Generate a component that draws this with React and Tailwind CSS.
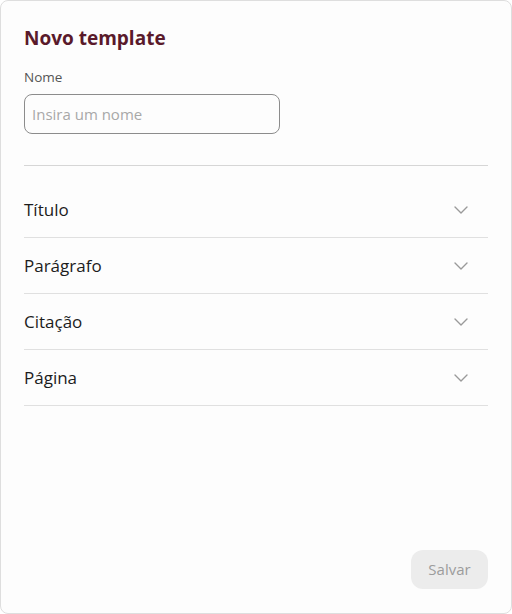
import React from "react";

const sections = ["Título", "Parágrafo", "Citação", "Página"];

function Chevron() {
  return (
    <svg width="14" height="8" viewBox="0 0 14 8" fill="none" className="text-[#9a9a9a]">
      <path d="M1 1l6 6 6-6" stroke="currentColor" strokeWidth="1.4" strokeLinecap="round" strokeLinejoin="round" />
    </svg>
  );
}

export default function App() {
  return (
    <div className="h-screen w-full bg-white font-['Open_Sans',sans-serif]">
      <div className="flex h-full flex-col rounded-lg border border-[#dedede] bg-[#fdfdfd] px-[23px] pt-[23px] pb-6">
        <h1 className="text-[19px] leading-7 font-bold text-[#5a1a2b]">Novo template</h1>

        <label className="mt-4 block text-[13.5px] leading-[18px] text-[#555]">Nome</label>
        <input
          type="text"
          placeholder="Insira um nome"
          className="mt-2 h-10 w-[256px] rounded-lg border border-[#8c8c8c] px-[7px] text-[15px] text-[#222] placeholder:text-[#a8a8a8] outline-none"
        />

        <div className="mt-[31px] border-t border-[#d6d6d6]" />

        <div className="mt-4 flex flex-col">
          {sections.map((s) => (
            <button
              key={s}
              className="flex h-[56px] items-center justify-between border-b border-[#e0e0e0] text-left"
            >
              <span className="text-[17px] text-[#1c1c1c]">{s}</span>
              <span className="mr-[20px] flex items-center">
                <Chevron />
              </span>
            </button>
          ))}
        </div>

        <div className="mt-auto flex justify-end">
          <button className="h-[39px] w-[77px] rounded-xl bg-[#ececec] text-[15px] font-medium text-[#9c9c9c]">
            Salvar
          </button>
        </div>
      </div>
    </div>
  );
}
